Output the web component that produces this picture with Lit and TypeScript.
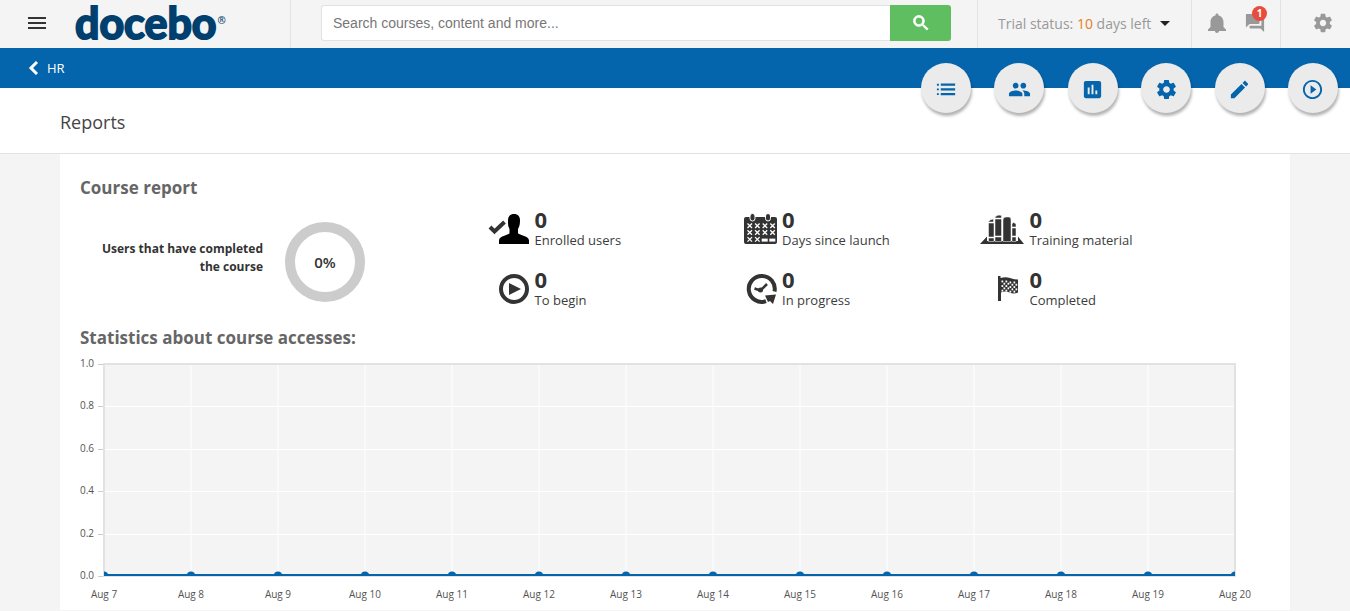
import { LitElement, html, svg, css } from "lit";
import { customElement, property } from "lit/decorators.js";

const GEAR =
  "M19.43 12.98c.04-.32.07-.64.07-.98s-.03-.66-.07-.98l2.11-1.65c.19-.15.24-.42.12-.64l-2-3.46c-.12-.22-.39-.3-.61-.22l-2.49 1c-.52-.4-1.08-.73-1.69-.98l-.38-2.65C14.46 2.18 14.25 2 14 2h-4c-.25 0-.46.18-.49.42l-.38 2.65c-.61.25-1.17.59-1.69.98l-2.49-1c-.23-.09-.49 0-.61.22l-2 3.46c-.13.22-.07.49.12.64l2.11 1.65c-.04.32-.07.65-.07.98s.03.66.07.98l-2.11 1.65c-.19.15-.24.42-.12.64l2 3.46c.12.22.39.3.61.22l2.49-1c.52.4 1.08.73 1.69.98l.38 2.65c.03.24.24.42.49.42h4c.25 0 .46-.18.49-.42l.38-2.65c.61-.25 1.17-.59 1.69-.98l2.49 1c.23.09.49 0 .61-.22l2-3.46c.12-.22.07-.49-.12-.64l-2.11-1.65zM12 15.5c-1.93 0-3.5-1.57-3.5-3.5s1.57-3.5 3.5-3.5 3.5 1.57 3.5 3.5-1.57 3.5-3.5 3.5z";

const ACTIONS = [
  {
    label: "Training material",
    path: "M2 8h2V6H2zM2 12.9h2v-2H2zM2 17.8h2v-2H2zM6 8.2h15V5.8H6zM6 13.1h15v-2.4H6zM6 18h15v-2.4H6z",
  },
  {
    label: "Enrollment",
    path: "M16 11c1.66 0 2.99-1.34 2.99-3S17.66 5 16 5c-1.66 0-3 1.34-3 3s1.34 3 3 3zm-8 0c1.66 0 2.99-1.34 2.99-3S9.66 5 8 5C6.34 5 5 6.34 5 8s1.34 3 3 3zm0 2c-2.33 0-7 1.17-7 3.5V19h14v-2.5c0-2.33-4.67-3.5-7-3.5zm8 0c-.29 0-.62.02-.97.05 1.16.84 1.97 1.97 1.97 3.45V19h6v-2.5c0-2.33-4.67-3.5-7-3.5z",
  },
  {
    label: "Reports",
    path: "M19 3H5c-1.1 0-2 .9-2 2v14c0 1.1.9 2 2 2h14c1.1 0 2-.9 2-2V5c0-1.1-.9-2-2-2zM9 17H7v-7h2v7zm4 0h-2V7h2v10zm4 0h-2v-4h2v4z",
  },
  { label: "Advanced settings", path: GEAR },
  {
    label: "Edit",
    path: "M3 17.25V21h3.75L17.81 9.94l-3.75-3.75L3 17.25zM20.71 7.04c.39-.39.39-1.02 0-1.41l-2.34-2.34c-.39-.39-1.02-.39-1.41 0l-1.83 1.83 3.75 3.75 1.83-1.83z",
  },
  {
    label: "Play",
    path: "M10 16.5l6-4.5-6-4.5v9zM12 2C6.48 2 2 6.48 2 12s4.48 10 10 10 10-4.48 10-10S17.52 2 12 2zm0 18c-4.41 0-8-3.59-8-8s3.59-8 8-8 8 3.59 8 8-3.59 8-8 8z",
  },
];

/* Stat icons are drawn on a shared 45 x 32 canvas, right aligned. */
const crosses = [0, 1, 2].flatMap((row) =>
  [0, 1, 2, 3].map((col) => {
    const x = 14.5 + col * 7.6;
    const y = 10.5 + row * 6.8;
    return row === 2 && col > 1
      ? svg`<path d="M${x - 1} ${y + 1.5}h6v3h-6z" fill="#fff" />`
      : svg`<path d="M${x} ${y}l4.5 4.5m0-4.5l-4.5 4.5" stroke="#fff" stroke-width="1.3" />`;
  }),
);

const checks = [0, 1, 2, 3, 4].flatMap((row) =>
  [0, 1, 2, 3, 4, 5, 6, 7]
    .filter((col) => (row + col) % 2 === 0)
    .map(
      (col) =>
        svg`<rect x=${20.5 + col * 2} y=${7.5 + row * 2.3 + (col > 3 ? 1 : 0)} width="1.7" height="1.9" fill="#fff" />`,
    ),
);

const ICONS = {
  user: svg`
    <path d="M4 14l4.5 4.5L18.500 9" fill="none" stroke="#333" stroke-width="4" />
    <path fill="#000" d="M28 1c4 0 6 2.5 6 6.5 0 3.5-.5 6-2 8.500v4c0 2 11 2.500 11 7.500V31H13v-3.500c0-5 10.500-5.500 10.500-7.500v-4c-1.500-2.500-1.500-5-1.500-8.500C22 3.500 24 1 28 1z" />`,
  calendar: svg`
    <path fill="#333" d="M13 4h29q2 0 2 2v23q0 2-2 2H13q-2 0-2-2V6q0-2 2-2z" />
    <g fill="#333" stroke="#fff"><rect x="17" y=".5" width="5" height="7.5" rx="2.5" /><rect x="32.5" y=".5" width="5" height="7.5" rx="2.5" /></g>
    ${crosses}`,
  books: svg`
    <path fill="#333" d="M-1 31l7-7.5V28h31v-4.5L43 31z" />
    <path fill="#333" stroke="#fff" stroke-width=".5" d="M7 9q2.5-3 5.5-3v3zM7.5 10h5.5v14H7.5zM7.5 25h5.5v3.5H7.5zM14 4q3-3 6.5-1.5V5H14zM14 6h6.5v17H14zM14 24h6.5v4.5H14zM22 7q0-3 3-3h3q2 0 2 3v21.5h-8zM31 11q1-3 4 0v3h-4zM31 15h4v8h-4zM31 24h4v4.5h-4z" />`,
  play: svg`
    <circle cx="28" cy="16" r="13" fill="none" stroke="#333" stroke-width="4" />
    <path fill="#333" d="M23 10l12 6-12 6z" />`,
  clock: svg`
    <path d="M41.5 18.5A13 13 0 1 0 33 28.2" fill="none" stroke="#333" stroke-width="4" />
    <path fill="#333" d="M32 22.5l11-1-3 9.500-3-3-2 1z" />
    <path d="M21.5 15.5l6 2L34 11" fill="none" stroke="#333" stroke-width="2.5" />
    <circle cx="27.5" cy="17" r="2.5" fill="#333" />`,
  flag: svg`
    <path fill="#333" d="M17 3h2.5v2q5-1.5 9.5 0t8 1.5v13q-4 2-8.500 0t-8.500 0V28H17z" />
    ${checks}`,
};

@customElement("app-topbar")
export class AppTopbar extends LitElement {
  static styles = css`
    :host {
      display: flex;
      height: 48px;
      background: #f4f4f4;
      color: #999;
    }
    button {
      border: 0;
      padding: 0;
      background: none;
      color: inherit;
      font: inherit;
      cursor: pointer;
    }
    svg {
      display: block;
      fill: currentColor;
    }
    .brand {
      flex: 0 0 290px;
      box-sizing: border-box;
      display: flex;
      align-items: center;
      gap: 29px;
      padding-left: 28px;
      padding-bottom: 2px;
    }
    .menu {
      color: #333;
    }
    .logo {
      display: flex;
      color: #003f6e;
      text-decoration: none;
      font: 700 43px/48px "Lato", sans-serif;
      -webkit-text-stroke: 2px #003f6e;
    }
    .mark {
      padding-left: 1px;
      font: 600 10px/42px "Open Sans", sans-serif;
      -webkit-text-stroke: 0;
    }
    .search {
      flex: 1;
      display: flex;
      align-items: flex-start;
      padding: 5px 26px 0 30px;
      border-left: 1px solid #e2e2e2;
    }
    .field {
      flex: 1;
      min-width: 0;
      box-sizing: border-box;
      height: 36px;
      border: 1px solid #e2e2e2;
      border-right: 0;
      border-radius: 3px 0 0 3px;
      padding: 0 11px;
      background: #fff;
      color: #333;
      font: 14px "Liberation Sans", sans-serif;
    }
    .field::placeholder {
      color: #777;
      opacity: 1;
    }
    .go {
      display: grid;
      place-items: center;
      width: 61px;
      height: 36px;
      border-radius: 0 3px 3px 0;
      background: #5fbf60;
      color: #fff;
    }
    .trial,
    .alerts,
    .settings {
      display: flex;
      align-items: center;
      box-sizing: border-box;
      border-left: 1px solid #e2e2e2;
      padding-bottom: 2px;
    }
    .trial {
      width: 214px;
      padding-left: 20px;
      gap: 9px;
      font-size: 14px;
      white-space: nowrap;
    }
    .days {
      color: #e67e22;
    }
    .caret {
      border: 5px solid transparent;
      border-top-color: #222;
      border-bottom: 0;
    }
    .alerts {
      width: 89px;
      padding-left: 13px;
      gap: 16px;
    }
    .chat {
      position: relative;
    }
    .badge {
      position: absolute;
      top: -7px;
      right: -2px;
      width: 15px;
      height: 15px;
      border-radius: 50%;
      background: #e74c3c;
      color: #fff;
      font-size: 10px;
      line-height: 15px;
      font-weight: 700;
      text-align: center;
    }
    .settings {
      width: 70px;
      padding-left: 31px;
    }
  `;

  render() {
    return html`
      <div class="brand">
        <button class="menu" aria-label="Menu">
          <svg width="18" height="14"><path d="M0 1h18v2H0zM0 6h18v2H0zM0 11h18v2H0z" /></svg>
        </button>
        <a class="logo" href="#">docebo<span class="mark">®</span></a>
      </div>
      <form class="search" role="search">
        <input class="field" type="search" aria-label="Search" placeholder="Search courses, content and more..." />
        <button class="go" type="button" aria-label="Search">
          <svg width="20" height="20" viewBox="0 0 24 24">
            <path stroke="currentColor" d="M15.5 14h-.79l-.28-.27C15.41 12.59 16 11.11 16 9.5 16 5.91 13.09 3 9.5 3S3 5.91 3 9.5 5.91 16 9.5 16c1.61 0 3.09-.59 4.23-1.57l.27.28v.79l5 4.99L20.49 19l-4.99-5zm-6 0C7.01 14 5 11.99 5 9.5S7.01 5 9.5 5 14 7.01 14 9.5 11.99 14 9.5 14z" />
          </svg>
        </button>
      </form>
      <button class="trial">
        <span>Trial status: <span class="days">10</span> days left</span><span class="caret"></span>
      </button>
      <div class="alerts">
        <button aria-label="Notifications">
          <svg width="24" height="24" viewBox="0 0 24 24">
            <path d="M12 22c1.1 0 2-.9 2-2h-4c0 1.1.89 2 2 2zm6.5-6v-5c0-3.07-1.9-5.9-5-6.5V4c0-.83-.67-1.5-1.5-1.5s-1.5.67-1.5 1.5v.5C7.4 5.1 5.5 7.9 5.5 11v5L3 18.500v1.500h18v-1.500z" />
          </svg>
        </button>
        <button class="chat" aria-label="Messages">
          <svg width="20" height="20" viewBox="1 1 22 22">
            <path d="M21 6h-2v9H6v2c0 .55.45 1 1 1h11l4 4V7c0-.55-.45-1-1-1zm-4 6V3c0-.55-.45-1-1-1H3c-.55 0-1 .45-1 1v14l4-4h10c.55 0 1-.45 1-1z" />
          </svg>
          <span class="badge">1</span>
        </button>
      </div>
      <div class="settings">
        <button aria-label="Settings">
          <svg width="22" height="22" viewBox="0 0 24 24"><path d=${GEAR} /></svg>
        </button>
      </div>
    `;
  }
}

@customElement("access-chart")
export class AccessChart extends LitElement {
  @property({ type: Array }) days: string[] = [];

  static styles = css`
    :host {
      display: block;
      padding: 6px 35px 0 24px;
    }
    .plot {
      display: block;
      width: 100%;
      height: 254px;
      overflow: visible;
    }
    .label {
      fill: #545454;
      font: 10px "Open Sans", sans-serif;
    }
  `;

  render() {
    const last = this.days.length - 1;
    const at = (i: number) => `${(i / last) * 100}%`;
    const ticks = [0, 1, 2, 3, 4, 5].map((i) => ({ y: Math.round(8 + i * 42.4), text: (1 - i / 5).toFixed(1) }));
    return html`
      <svg class="plot" role="img" aria-label="Course accesses per day">
        <defs>
          <clipPath id="area"><rect x="0" y="0" width="100%" height="220" /></clipPath>
        </defs>
        <rect y="8" width="100%" height="212" fill="#f4f4f4" />
        ${this.days.map((_, i) => svg`<line x1=${at(i)} x2=${at(i)} y1="8" y2="220" stroke="#fff" />`)}
        ${ticks.map(
          (t) => svg`
            <line x1="0" x2="100%" y1=${t.y + 0.5} y2=${t.y + 0.5} stroke="#fff" />
            <line x1="-6" x2="0" y1=${t.y + 0.5} y2=${t.y + 0.5} stroke="#ccc" />
            <text class="label" x="-10" y=${t.y + 3} text-anchor="end">${t.text}</text>`,
        )}
        <rect y="8" width="100%" height="212" fill="none" stroke="#e2e2e2" stroke-width="2" />
        <g clip-path="url(#area)" fill="#0465ac">
          <rect y="218" width="100%" height="2" />
          ${this.days.map((_, i) => svg`<circle cx=${at(i)} cy="220" r="4.5" />`)}
        </g>
        ${this.days.map(
          (d, i) => svg`<text class="label" x=${at(i)} y="242" text-anchor="middle">${d}</text>`,
        )}
      </svg>
    `;
  }
}

@customElement("app-root")
export class AppRoot extends LitElement {
  static styles = css`
    :host {
      display: block;
      min-height: 100vh;
      background: #f4f4f4;
      color: #333;
      font-family: "Open Sans", sans-serif;
      font-size: 13px;
    }
    .bar {
      position: relative;
      display: flex;
      align-items: center;
      height: 40px;
      padding: 0 28px;
      background: #0465ac;
    }
    .back {
      display: flex;
      align-items: center;
      gap: 9px;
      color: #fff;
      text-decoration: none;
    }
    .actions {
      position: absolute;
      top: 15px;
      right: 12px;
      width: 417px;
      display: flex;
      justify-content: space-between;
    }
    .action {
      display: grid;
      place-items: center;
      width: 50px;
      height: 50px;
      padding: 2px 0 0;
      border: 0;
      border-radius: 50%;
      background: #ebebeb;
      box-shadow: 1px 3px 3px rgba(0, 0, 0, 0.3);
      fill: #0465ac;
      cursor: pointer;
    }
    .heading {
      padding: 22px 60px 18px;
      border-bottom: 1px solid #e2e2e2;
      background: #fff;
      color: #444;
      font-size: 18px;
      line-height: 25px;
    }
    h1,
    h2 {
      margin: 0;
      font-size: inherit;
      font-weight: inherit;
    }
    .card {
      margin: 0 60px;
      padding: 22px 20px 0;
      background: #fff;
    }
    .title {
      color: #666;
      font-size: 17px;
      line-height: 24px;
      font-weight: 700;
    }
    .summary {
      display: grid;
      grid-template-columns: 34% 1fr;
      padding-top: 6px;
    }
    .completion {
      display: flex;
      align-items: center;
      align-self: start;
      padding-top: 16px;
      gap: 22px;
    }
    .caption {
      width: 183px;
      padding-bottom: 8px;
      font-size: 12px;
      line-height: 18px;
      font-weight: 700;
      text-align: right;
    }
    .donut {
      display: grid;
      place-items: center;
      box-sizing: border-box;
      width: 80px;
      height: 80px;
      border: 10px solid #ccc;
      border-radius: 50%;
      font-size: 15px;
      font-weight: 600;
    }
    .stats {
      display: grid;
      grid-template-columns: repeat(3, 1fr);
      padding-right: 43px;
    }
    .stat {
      display: flex;
      gap: 5px;
      height: 60px;
    }
    .glyph {
      flex: none;
      width: 45px;
      padding-top: 7px;
    }
    .value {
      font-size: 22px;
      line-height: 26px;
      font-weight: 700;
    }
    .name {
      line-height: 16px;
      color: #3c3c3c;
    }
  `;

  private stats = [
    { icon: ICONS.user, value: 0, name: "Enrolled users" },
    { icon: ICONS.calendar, value: 0, name: "Days since launch" },
    { icon: ICONS.books, value: 0, name: "Training material" },
    { icon: ICONS.play, value: 0, name: "To begin" },
    { icon: ICONS.clock, value: 0, name: "In progress" },
    { icon: ICONS.flag, value: 0, name: "Completed" },
  ];

  private days = Array.from({ length: 14 }, (_, i) => `Aug ${i + 7}`);

  render() {
    return html`
      <app-topbar></app-topbar>
      <nav class="bar">
        <a class="back" href="#">
          <svg width="10" height="14"><path d="M9 1L3 7l6 6" fill="none" stroke="#fff" stroke-width="3" /></svg>
          HR
        </a>
        <div class="actions">
          ${ACTIONS.map(
            (a) => html`
              <button class="action" aria-label=${a.label}>
                <svg width="23" height="23" viewBox="0 0 24 24"><path d=${a.path} /></svg>
              </button>
            `,
          )}
        </div>
      </nav>
      <header class="heading"><h1>Reports</h1></header>
      <main class="card">
        <h2 class="title">Course report</h2>
        <section class="summary">
          <div class="completion">
            <div class="caption">Users that have completed the course</div>
            <div class="donut">0%</div>
          </div>
          <div class="stats">
            ${this.stats.map(
              (s) => html`
                <div class="stat">
                  <div class="glyph"><svg width="45" height="32" viewBox="-1 0 45 32" overflow="visible">${s.icon}</svg></div>
                  <div>
                    <div class="value">${s.value}</div>
                    <div class="name">${s.name}</div>
                  </div>
                </div>
              `,
            )}
          </div>
        </section>
        <h2 class="title">Statistics about course accesses:</h2>
        <access-chart .days=${this.days}></access-chart>
      </main>
    `;
  }
}
